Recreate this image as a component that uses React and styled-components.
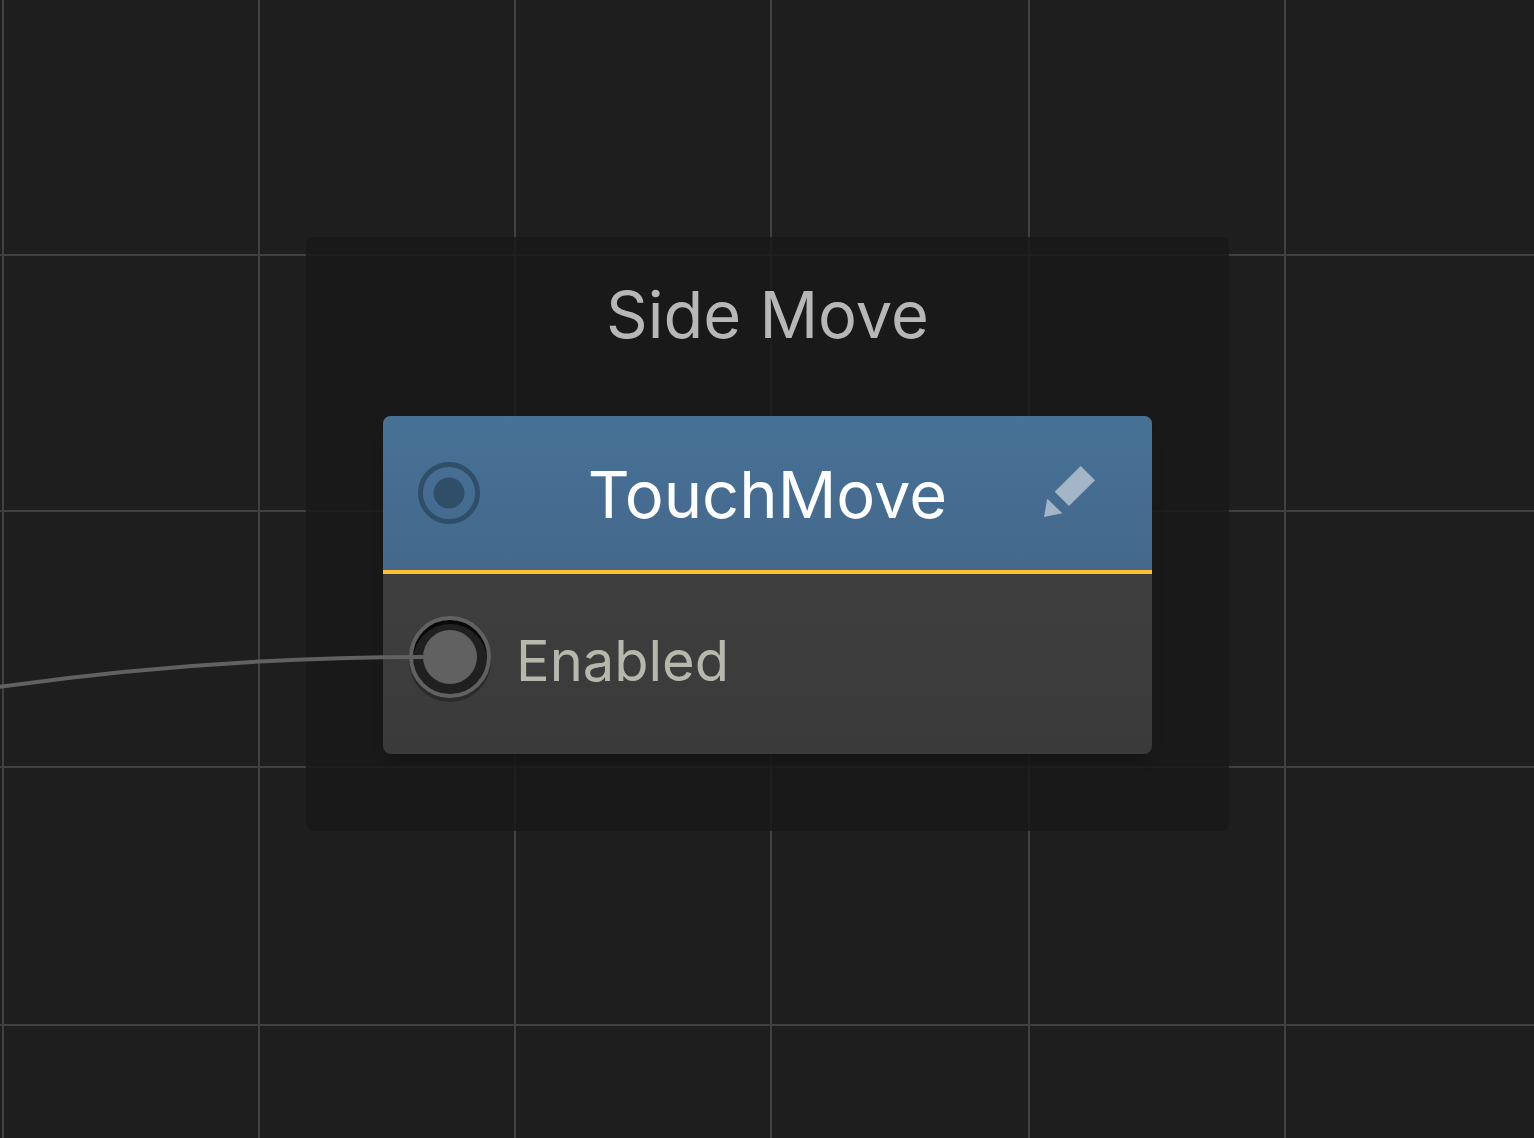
import styled, { createGlobalStyle } from "styled-components";

const GlobalStyle = createGlobalStyle`
  * {
    box-sizing: border-box;
  }
  body {
    margin: 0;
    background-color: #1e1e1e;
    font-family: Inter, "Liberation Sans", sans-serif;
  }
`;

const Canvas = styled.main`
  position: relative;
  min-height: 100vh;
  overflow: hidden;
`;

const GridLines = styled.svg`
  position: absolute;
  inset: 0;
  width: 100%;
  height: 100%;
  stroke: #404040;
  stroke-width: 2;
`;

const Wires = styled.svg`
  position: absolute;
  inset: 0;
  width: 100%;
  height: 100%;
  fill: none;
  stroke: #616161;
  stroke-width: 4;
  pointer-events: none;
`;

const Group = styled.section`
  position: absolute;
  left: 306px;
  top: 237px;
  width: 923px;
  padding: 38px 77px 77px;
  border-radius: 8px;
  background-color: rgba(25, 25, 25, 0.88);
`;

const GroupTitle = styled.h1`
  margin: 0 0 61px;
  font-size: 65px;
  font-weight: 400;
  line-height: 80px;
  text-align: center;
  color: #b7b7b7;
`;

const Node = styled.article`
  border-radius: 8px;
  overflow: hidden;
  background: linear-gradient(#424242, #3a3a3a);
  box-shadow: 0 12px 16px -8px rgba(0, 0, 0, 0.3);
`;

const NodeHeader = styled.header`
  display: grid;
  grid-template-columns: 62px 1fr 62px;
  align-items: center;
  height: 158px;
  padding: 0 48px 0 35px;
  background: linear-gradient(#477196, #44698c);
  border-bottom: 4px solid #ffc02f;
`;

const NodeTitle = styled.h2`
  margin: 0;
  padding: 4px 0 0 13px;
  font-size: 65px;
  font-weight: 400;
  line-height: 80px;
  text-align: center;
  color: #ffffff;
`;

const IconButton = styled.button`
  display: flex;
  align-items: center;
  justify-content: center;
  width: 62px;
  height: 62px;
  padding: 0;
  border: none;
  background: none;
  color: ${({ $color }) => $color};
  cursor: pointer;
`;

const NodeBody = styled.div`
  display: flex;
  align-items: flex-start;
  height: 180px;
  padding: 42px 26px;
`;

const PortRow = styled.div`
  display: flex;
  align-items: center;
  gap: 25px;
`;

const Port = styled.button`
  display: flex;
  align-items: center;
  justify-content: center;
  width: 82px;
  height: 82px;
  padding: 0;
  border: 4px solid #616161;
  border-radius: 50%;
  background-color: #202020;
  box-shadow: 0 4px 0 #2b2b2b, inset 0 4px 0 #080808;
  cursor: pointer;
  &::before {
    content: "";
    width: 54px;
    height: 54px;
    border-radius: 50%;
    background-color: #616161;
  }
`;

const PortLabel = styled.span`
  padding-top: 8px;
  font-size: 56px;
  line-height: 72px;
  color: #b7b8ac;
`;

// line spacing is a little over 256px, snapped to even pixels
const SPACING = 128.25;
const lineAt = (start, i) => 2 * Math.floor(start + SPACING * i) + 1;
const steps = Array.from({ length: 16 }, (_, i) => i);

function Grid() {
  return (
    <GridLines aria-hidden="true">
      {steps.map((i) => (
        <line key={`x${i}`} x1={lineAt(1, i)} x2={lineAt(1, i)} y1="0" y2="100%" />
      ))}
      {steps.map((i) => (
        <line key={`y${i}`} x1="0" x2="100%" y1={lineAt(127.3, i)} y2={lineAt(127.3, i)} />
      ))}
    </GridLines>
  );
}

function TargetIcon() {
  return (
    <svg width="62" height="62" viewBox="0 0 62 62" aria-hidden="true">
      <circle cx="31" cy="31" r="28.5" fill="none" stroke="currentColor" strokeWidth="5" />
      <circle cx="31" cy="31" r="15.5" fill="currentColor" />
    </svg>
  );
}

function PencilIcon() {
  return (
    <svg width="62" height="62" viewBox="0 0 62 62" fill="currentColor" aria-hidden="true">
      <path d="M38.7 4 53 18.3 27 44 12.7 29.7Z" />
      <path d="M5.3 36.7 20.3 51.2 2 55Z" />
    </svg>
  );
}

function App() {
  return (
    <Canvas>
      <GlobalStyle />
      <Grid />
      <Group>
        <GroupTitle>Side Move</GroupTitle>
        <Node>
          <NodeHeader>
            <IconButton type="button" aria-label="Node input" $color="#2f4f68">
              <TargetIcon />
            </IconButton>
            <NodeTitle>TouchMove</NodeTitle>
            <IconButton type="button" aria-label="Edit node" $color="#a2b6c8">
              <PencilIcon />
            </IconButton>
          </NodeHeader>
          <NodeBody>
            <PortRow>
              <Port type="button" aria-labelledby="enabled-port" />
              <PortLabel id="enabled-port">Enabled</PortLabel>
            </PortRow>
          </NodeBody>
        </Node>
      </Group>
      <Wires aria-hidden="true">
        <path d="M-2 687Q212 657 425 657" />
      </Wires>
    </Canvas>
  );
}

export default App;
